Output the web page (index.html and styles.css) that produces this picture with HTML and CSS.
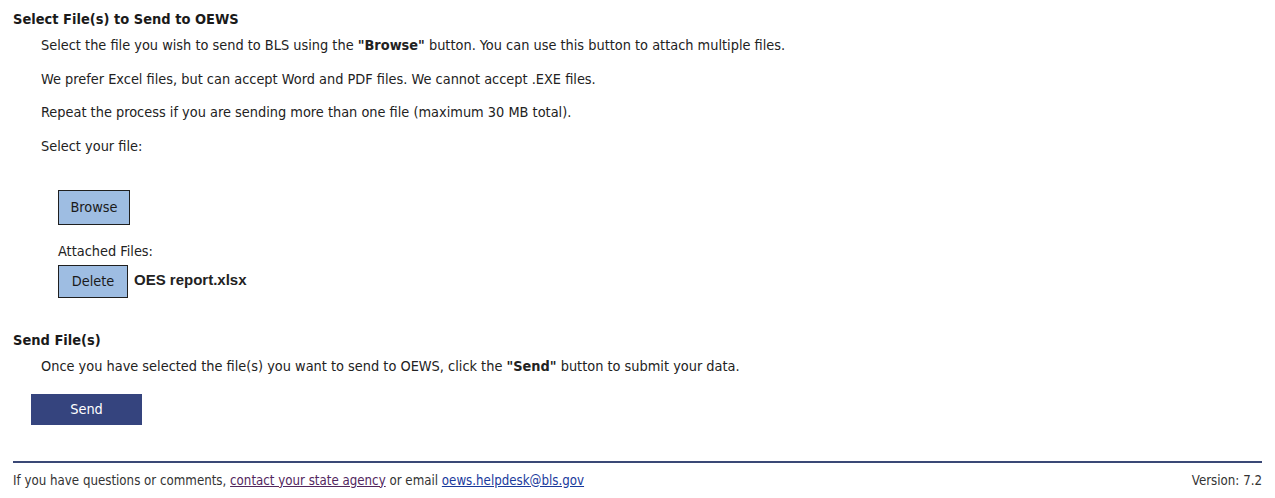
FILE: index.html
```html
<!DOCTYPE html>
<html lang="en">
<head>
<meta charset="utf-8">
<title>Send Files to OEWS</title>
<link rel="stylesheet" href="styles.css">
</head>
<body>
<main class="page">
  <section class="section">
    <h2 class="heading">Select File(s) to Send to OEWS</h2>
    <div class="body">
      <p class="para">Select the file you wish to send to BLS using the <b>"Browse"</b> button. You can use this button to attach multiple files.</p>
      <p class="para">We prefer Excel files, but can accept Word and PDF files. We cannot accept .EXE files.</p>
      <p class="para">Repeat the process if you are sending more than one file (maximum 30 MB total).</p>
      <p class="para">Select your file:</p>
      <div class="upload">
        <button class="btn btn-light browse" type="button">Browse</button>
        <div class="attached-label">Attached Files:</div>
        <div class="file-row">
          <button class="btn btn-light delete" type="button">Delete</button>
          <span class="file-name">OES report.xlsx</span>
        </div>
      </div>
    </div>
  </section>
  <section class="section send-section">
    <h2 class="heading">Send File(s)</h2>
    <div class="body">
      <p class="para">Once you have selected the file(s) you want to send to OEWS, click the <b>"Send"</b> button to submit your data.</p>
    </div>
    <button class="btn btn-dark send" type="button">Send</button>
  </section>
  <footer class="footer">
    <span>If you have questions or comments, <a class="link visited" href="#">contact your state agency</a> or email <a class="link" href="#">oews.helpdesk@bls.gov</a></span>
    <span>Version: 7.2</span>
  </footer>
</main>
</body>
</html>
```
FILE: styles.css
```css
html, body {
  margin: 0;
  padding: 0;
  background: #ffffff;
}
body {
  font-family: "DejaVu Sans Condensed", "DejaVu Sans", sans-serif;
  font-size: 14.4px;
  color: #222222;
}
.page {
  padding: 10px 13px 0 13px;
}
.heading {
  font-size: 14.5px;
  font-weight: bold;
  margin: 0;
  line-height: 18px;
  color: #1a1a1a;
}
.body {
  padding-left: 28px;
}
.para {
  margin: 0;
  margin-top: 14px;
  line-height: 19.7px;
}
.heading + .body .para:first-child {
  margin-top: 8px;
}
.upload {
  padding-left: 17px;
  padding-top: 33px;
}
.btn {
  font-family: inherit;
  font-size: 14.4px;
  cursor: pointer;
}
.btn-light {
  background: #9ebde2;
  border: 1px solid #1f1f1f;
  color: #1a1a1a;
  border-radius: 0;
  padding: 0;
}
.browse {
  width: 72px;
  height: 35px;
  display: block;
}
.attached-label {
  margin-top: 17px;
  line-height: 18px;
}
.file-row {
  display: flex;
  align-items: center;
  gap: 6px;
  margin-top: 5px;
}
.delete {
  width: 70px;
  height: 33px;
}
.file-name {
  font-family: "Liberation Sans", Arial, sans-serif;
  font-weight: bold;
  font-size: 15px;
  margin-top: -3px;
}
.send-section {
  margin-top: 33px;
}
.send {
  display: block;
  margin-left: 18px;
  margin-top: 17px;
  width: 111px;
  height: 31px;
  background: #35447e;
  border: none;
  color: #ffffff;
  border-radius: 0;
  padding: 0;
}
.footer {
  margin-top: 36px;
  border-top: 2px solid #3a4876;
  display: flex;
  justify-content: space-between;
  padding-top: 10px;
  font-size: 13.2px;
  color: #333333;
  line-height: 16px;
}
.link {
  color: #1a3a9c;
  text-decoration: underline;
}
.link.visited {
  color: #52265e;
}
```
